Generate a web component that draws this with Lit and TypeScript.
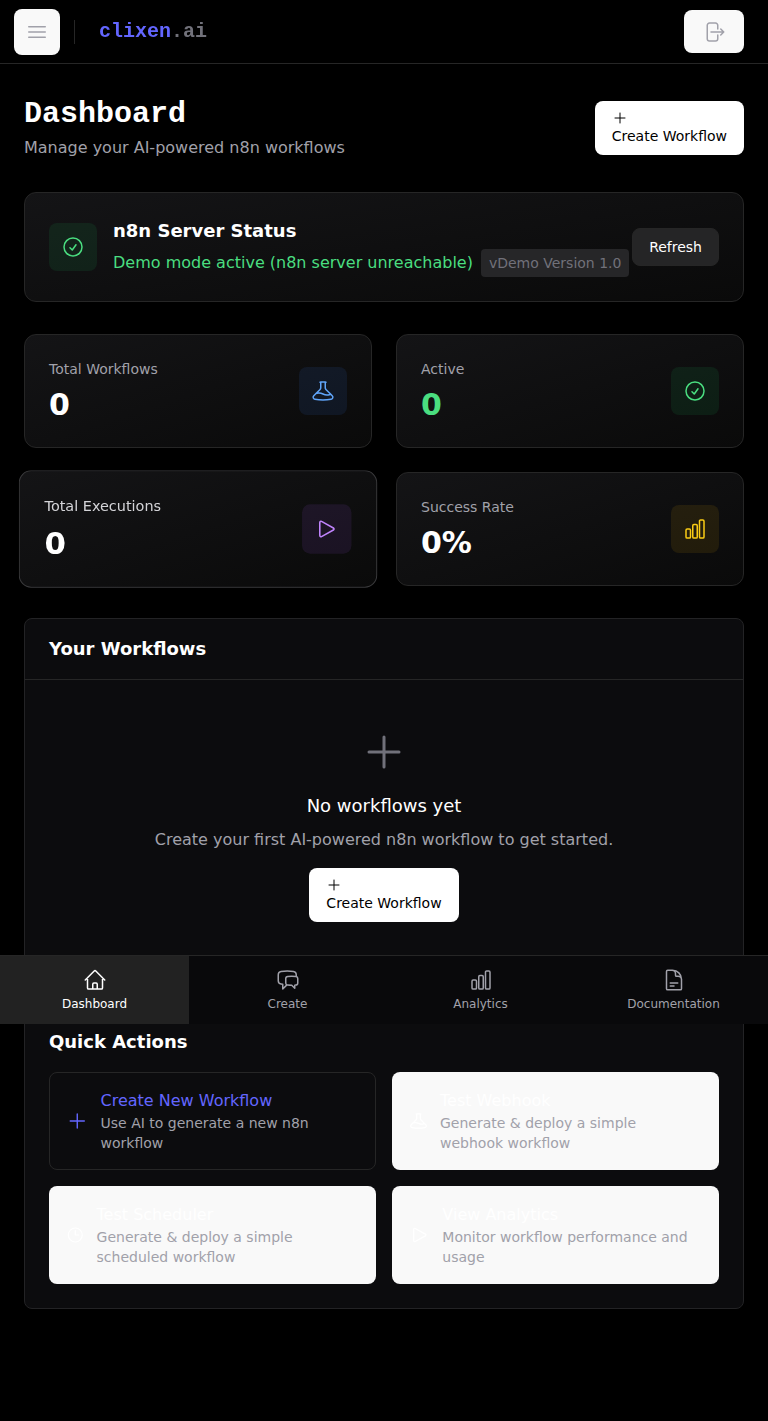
import { LitElement, html, css, svg } from "lit";
import { customElement, property } from "lit/decorators.js";

const ICONS: Record<string, string> = {
  menu: "M3.75 6.75h16.5M3.75 12h16.5m-16.5 5.25h16.5",
  logout:
    "M15.75 9V5.25A2.25 2.25 0 0013.5 3h-6a2.25 2.25 0 00-2.25 2.25v13.5A2.25 2.25 0 007.5 21h6a2.25 2.25 0 002.25-2.25V15m3 0l3-3m0 0l-3-3m3 3H9",
  plus: "M12 4.5v15m7.5-7.5h-15",
  check: "M9 12.75L11.25 15 15 9.75M21 12a9 9 0 11-18 0 9 9 0 0118 0z",
  beaker:
    "M9.75 3.104v5.714a2.25 2.25 0 01-.659 1.591L5 14.5M9.75 3.104c-.251.023-.501.05-.75.082m.75-.082a24.301 24.301 0 014.5 0m0 0v5.714c0 .597.237 1.17.659 1.591L19.8 15.3M14.25 3.104c.251.023.501.05.75.082M19.8 15.3l-1.57.393A9.065 9.065 0 0112 15a9.065 9.065 0 00-6.23-.693L5 14.5m14.8.8l1.402 1.402c1.232 1.232.65 3.318-1.067 3.611A48.309 48.309 0 0112 21c-2.773 0-5.491-.235-8.135-.687-1.718-.293-2.3-2.379-1.067-3.61L5 14.5",
  play: "M5.25 5.653c0-.856.917-1.398 1.667-.986l11.54 6.348a1.125 1.125 0 010 1.971l-11.54 6.347a1.125 1.125 0 01-1.667-.985V5.653z",
  chart:
    "M3 13.125C3 12.504 3.504 12 4.125 12h2.25c.621 0 1.125.504 1.125 1.125v6.75C7.5 20.496 6.996 21 6.375 21h-2.25A1.125 1.125 0 013 19.875v-6.75zM9.75 8.625c0-.621.504-1.125 1.125-1.125h2.25c.621 0 1.125.504 1.125 1.125v11.25c0 .621-.504 1.125-1.125 1.125h-2.25a1.125 1.125 0 01-1.125-1.125V8.625zM16.5 4.125c0-.621.504-1.125 1.125-1.125h2.25C20.496 3 21 3.504 21 4.125v15.75c0 .621-.504 1.125-1.125 1.125h-2.25a1.125 1.125 0 01-1.125-1.125V4.125z",
  home: "M2.25 12l8.954-8.955c.44-.439 1.152-.439 1.591 0L21.75 12M4.5 9.75v10.125c0 .621.504 1.125 1.125 1.125H9.75v-4.875c0-.621.504-1.125 1.125-1.125h2.25c.621 0 1.125.504 1.125 1.125V21h4.125c.621 0 1.125-.504 1.125-1.125V9.75M8.25 21h8.25",
  chat: "M20.25 8.511c.884.284 1.5 1.128 1.5 2.097v4.286c0 1.136-.847 2.1-1.98 2.193-.34.027-.68.052-1.02.072v3.091l-3-3c-1.354 0-2.694-.055-4.02-.163a2.115 2.115 0 01-.825-.242m9.345-8.334a2.126 2.126 0 00-.476-.095 48.64 48.64 0 00-8.048 0c-1.131.094-1.976 1.057-1.976 2.192v4.286c0 .837.46 1.58 1.155 1.951m9.345-8.334V6.637c0-1.621-1.152-3.026-2.76-3.235A48.455 48.455 0 0011.25 3c-2.115 0-4.198.137-6.24.402-1.608.209-2.76 1.614-2.76 3.235v6.226c0 1.621 1.152 3.026 2.76 3.235.577.075 1.157.14 1.74.194V21l4.155-4.155",
  doc: "M19.5 14.25v-2.625a3.375 3.375 0 00-3.375-3.375h-1.5A1.125 1.125 0 0113.5 7.125v-1.5a3.375 3.375 0 00-3.375-3.375H8.25m0 12.75h7.5m-7.5 3H12M10.5 2.25H5.625c-.621 0-1.125.504-1.125 1.125v17.25c0 .621.504 1.125 1.125 1.125h12.75c.621 0 1.125-.504 1.125-1.125V11.25a9 9 0 00-9-9z",
  clock: "M12 6v6h4.5m4.5 0a9 9 0 11-18 0 9 9 0 0118 0z",
};

const icon = (name: string, size = "md") => html`<svg
  class="icon ${size}"
  viewBox="0 0 24 24"
  fill="none"
  stroke="currentColor"
  stroke-width="1.5"
  stroke-linecap="round"
  stroke-linejoin="round"
>${svg`<path d=${ICONS[name]}></path>`}</svg>`;

const shared = css`
  * {
    box-sizing: border-box;
    margin: 0;
  }
  button {
    font: inherit;
    color: inherit;
    border: 1px solid transparent;
    border-radius: 8px;
    text-align: left;
  }
  .icon {
    display: block;
  }
  .sm {
    width: 16px;
    height: 16px;
  }
  .md {
    width: 24px;
    height: 24px;
  }
  .lg {
    width: 48px;
    height: 48px;
  }
  .tile {
    display: flex;
    align-items: center;
    justify-content: center;
    flex: none;
    width: 48px;
    height: 48px;
    border-radius: 8px;
  }
  .green {
    color: #4ade80;
    background: rgba(34, 197, 94, 0.1);
  }
  .blue {
    color: #60a5fa;
    background: rgba(59, 130, 246, 0.1);
  }
  .purple {
    color: #c084fc;
    background: rgba(168, 85, 247, 0.1);
  }
  .yellow {
    color: #facc15;
    background: rgba(234, 179, 8, 0.1);
  }
  .card {
    display: flex;
    align-items: center;
    justify-content: space-between;
    padding: 24px;
    border: 1px solid #262626;
    border-radius: 12px;
    background: linear-gradient(to bottom right, #141416 0%, #0a0a0a 100%);
  }
`;

@customElement("stat-card")
class StatCard extends LitElement {
  @property() label = "";
  @property() value = "";
  @property() glyph = "";
  @property() tone = "";
  @property({ type: Boolean }) accent = false;
  @property({ type: Boolean }) raised = false;

  static styles = [
    shared,
    css`
      :host {
        display: block;
      }
      .raised {
        border-color: #3a3a3c;
        transform: scale(1.03);
        will-change: transform;
      }
      .label {
        font-size: 14px;
        line-height: 20px;
        color: #a1a1aa;
      }
      .raised .label {
        color: #d4d4d8;
      }
      .value {
        margin-top: 8px;
        font-size: 30px;
        line-height: 36px;
        font-weight: 700;
        color: #fff;
      }
      .accent {
        color: #4ade80;
      }
    `,
  ];

  render() {
    return html`<div class="card ${this.raised ? "raised" : ""}">
      <div>
        <p class="label">${this.label}</p>
        <p class="value ${this.accent ? "accent" : ""}">${this.value}</p>
      </div>
      <div class="tile ${this.tone}">${icon(this.glyph)}</div>
    </div>`;
  }
}

const ACTIONS = [
  { glyph: "plus", title: "Create New Workflow", text: "Use AI to generate a new n8n workflow", kind: "primary" },
  { glyph: "beaker", title: "Test Webhook", text: "Generate & deploy a simple webhook workflow", kind: "pale" },
  { glyph: "clock", title: "Test Scheduler", text: "Generate & deploy a simple scheduled workflow", kind: "pale" },
  { glyph: "play", title: "View Analytics", text: "Monitor workflow performance and usage", kind: "pale" },
];

const TABS = [
  { glyph: "home", label: "Dashboard", state: "current" },
  { glyph: "chat", label: "Create", state: "" },
  { glyph: "chart", label: "Analytics", state: "" },
  { glyph: "doc", label: "Documentation", state: "" },
];

@customElement("app-root")
class AppRoot extends LitElement {
  static styles = [
    shared,
    css`
      :host {
        display: block;
        position: relative;
        min-height: 1421px;
        background: #000;
        color: #fff;
        font-family: "DejaVu Sans", sans-serif;
        font-size: 16px;
        line-height: 24px;
      }
      header {
        display: flex;
        align-items: center;
        height: 64px;
        padding: 0 24px 0 14px;
        border-bottom: 1px solid #262626;
        background: #000;
        will-change: transform;
      }
      .menu,
      .logout {
        display: flex;
        align-items: center;
        justify-content: center;
        padding: 0;
        background: #f9f9f9;
        color: #a1a1aa;
      }
      .menu {
        width: 46px;
        height: 46px;
      }
      .logout {
        width: 60px;
        height: 43px;
        margin-left: auto;
      }
      .rule {
        width: 1px;
        height: 24px;
        margin: 0 24px 0 14px;
        background: #262626;
      }
      .brand {
        font: 700 20px/28px "Liberation Mono", monospace;
        color: #6366ff;
      }
      .brand span {
        color: #71717a;
      }
      main {
        padding: 32px 24px 0;
      }
      .intro {
        display: flex;
        align-items: center;
        justify-content: space-between;
        margin-bottom: 32px;
      }
      h1 {
        font: 700 30px/36px "Liberation Mono", monospace;
      }
      .muted {
        color: #a1a1aa;
      }
      .intro .muted {
        margin-top: 4px;
      }
      .create {
        display: block;
        padding: 8px 16px;
        background: #fff;
        color: #000;
        font-size: 14px;
        line-height: 20px;
      }
      .status-main {
        display: flex;
        align-items: center;
        gap: 16px;
      }
      h2 {
        font-size: 18px;
        line-height: 28px;
        font-weight: 700;
      }
      .status-line {
        display: flex;
        align-items: center;
        gap: 8px;
        margin-top: 4px;
        white-space: nowrap;
        color: #4ade80;
      }
      .badge {
        padding: 4px 8px;
        border-radius: 4px;
        background: #262628;
        color: #71717a;
        font-size: 14px;
        line-height: 20px;
      }
      .refresh {
        flex: none;
        padding: 8px 16px;
        border-color: #262626;
        background: #252526;
        font-size: 14px;
        line-height: 20px;
      }
      .stats {
        display: grid;
        grid-template-columns: 1fr 1fr;
        gap: 24px;
        margin: 32px 0;
      }
      .panel {
        border: 1px solid #232325;
        border-radius: 8px;
        background: #0c0c0e;
        margin-bottom: 32px;
      }
      .panel-head {
        padding: 16px 24px;
        border-bottom: 1px solid #262626;
      }
      .empty {
        display: flex;
        flex-direction: column;
        align-items: center;
        padding: 48px 0;
      }
      .empty .lg {
        color: #71717a;
      }
      h3 {
        margin: 16px 0 8px;
        font-size: 18px;
        line-height: 28px;
        font-weight: 400;
      }
      .empty .create {
        margin-top: 16px;
      }
      .quick {
        padding: 24px;
      }
      .actions {
        display: grid;
        grid-template-columns: 1fr 1fr;
        gap: 16px;
        margin-top: 16px;
      }
      .action {
        display: flex;
        align-items: center;
        gap: 12px;
        padding: 16px;
      }
      .primary {
        border-color: #262626;
        background: transparent;
        color: #6366ff;
      }
      .pale {
        background: #f9f9f9;
        color: #fff;
      }
      .action .muted {
        font-size: 14px;
        line-height: 20px;
      }
      nav {
        position: absolute;
        left: 0;
        right: 0;
        top: 955px;
        display: grid;
        grid-template-columns: repeat(4, 1fr);
        gap: 4px;
        border-top: 1px solid #262626;
        background: #09090b;
      }
      .tab {
        display: flex;
        flex-direction: column;
        align-items: center;
        gap: 4px;
        padding: 12px 0;
        color: #a1a1aa;
        font-size: 12px;
        line-height: 16px;
      }
      .current {
        background: #222222;
        color: #fff;
      }
    `,
  ];

  private createButton() {
    return html`<button class="create">${icon("plus", "sm")}Create Workflow</button>`;
  }

  render() {
    return html`
      <header>
        <button class="menu">${icon("menu")}</button>
        <div class="rule"></div>
        <div class="brand">clixen<span>.ai</span></div>
        <button class="logout">${icon("logout")}</button>
      </header>
      <main>
        <div class="intro">
          <div>
            <h1>Dashboard</h1>
            <p class="muted">Manage your AI-powered n8n workflows</p>
          </div>
          ${this.createButton()}
        </div>

        <section class="card">
          <div class="status-main">
            <div class="tile green">${icon("check")}</div>
            <div>
              <h2>n8n Server Status</h2>
              <div class="status-line">
                <span>Demo mode active (n8n server unreachable)</span>
                <span class="badge">vDemo Version 1.0</span>
              </div>
            </div>
          </div>
          <button class="refresh">Refresh</button>
        </section>

        <section class="stats">
          <stat-card label="Total Workflows" value="0" glyph="beaker" tone="blue"></stat-card>
          <stat-card label="Active" value="0" glyph="check" tone="green" accent></stat-card>
          <stat-card label="Total Executions" value="0" glyph="play" tone="purple" raised></stat-card>
          <stat-card label="Success Rate" value="0%" glyph="chart" tone="yellow"></stat-card>
        </section>

        <section class="panel">
          <div class="panel-head"><h2>Your Workflows</h2></div>
          <div class="empty">
            ${icon("plus", "lg")}
            <h3>No workflows yet</h3>
            <p class="muted">Create your first AI-powered n8n workflow to get started.</p>
            ${this.createButton()}
          </div>
        </section>

        <section class="panel quick">
          <h2>Quick Actions</h2>
          <div class="actions">
            ${ACTIONS.map(
              (a) => html`<button class="action ${a.kind}">
                ${icon(a.glyph)}
                <div>
                  <div>${a.title}</div>
                  <div class="muted">${a.text}</div>
                </div>
              </button>`,
            )}
          </div>
        </section>
      </main>
      <nav>
        ${TABS.map((t) => html`<div class="tab ${t.state}">${icon(t.glyph)}<span>${t.label}</span></div>`)}
      </nav>
    `;
  }
}
